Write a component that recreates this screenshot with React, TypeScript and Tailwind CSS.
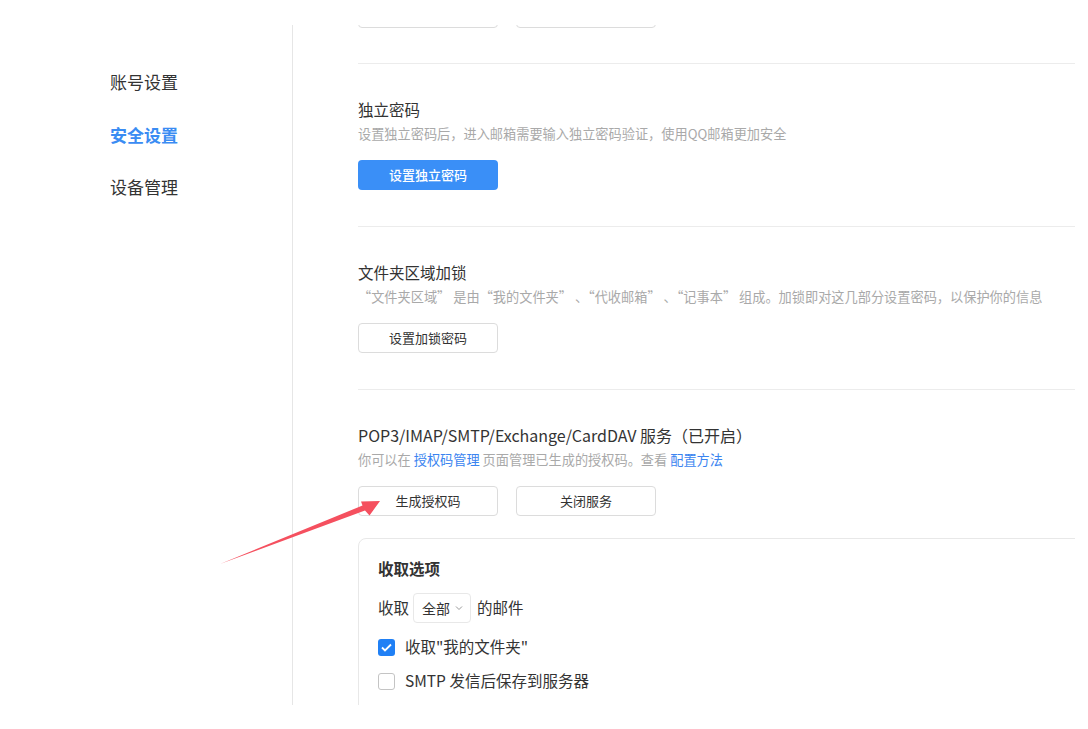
import React from 'react';

const font = { fontFamily: '"Noto Sans CJK SC", "Noto Sans", sans-serif' };

const navItems = [
  { label: '账号设置', active: false },
  { label: '安全设置', active: true },
  { label: '设备管理', active: false },
];

const PrimaryButton: React.FC<{ children?: React.ReactNode }> = ({ children }) => (
  <button className="h-[30px] w-[140px] rounded-[4px] bg-[#3a8ff7] text-[13px] font-medium text-white">
    {children}
  </button>
);

const GhostButton: React.FC<{ children?: React.ReactNode }> = ({ children }) => (
  <button className="h-[30px] w-[140px] rounded-[4px] border border-[#dcdcdc] bg-white text-[13px] text-[#333]">
    {children}
  </button>
);

const Section: React.FC<{ title: React.ReactNode; desc: React.ReactNode; children: React.ReactNode; last?: boolean }> = ({
  title,
  desc,
  children,
  last = false,
}) => (
  <div className={`border-t border-[#ececec] pt-[34px] ${last ? 'pb-[22px]' : 'pb-[36px]'}`}>
    <div className="h-[22px] text-[15.5px] leading-[22px] text-[#333]">{title}</div>
    <div className="mt-[5px] h-[18px] whitespace-nowrap text-[13.2px] leading-[18px] text-[#a9a9a9]">{desc}</div>
    <div className="mt-[17px] flex gap-[18px]">{children}</div>
  </div>
);

const Arrow: React.FC = () => (
  <svg className="pointer-events-none absolute left-0 top-0" width="1088" height="729" viewBox="0 0 1088 729">
    <polygon
      points="220,564 362.5,505.5 361,501.5 380,501 369.5,515.5 365,510.5"
      fill="#f5505f"
    />
  </svg>
);

const App: React.FC = () => {
  return (
    <div className="relative h-[729px] w-[1088px] overflow-hidden bg-white" style={font}>
      <div className="flex h-[705px] pt-[25px]">
        <aside className="w-[293px] shrink-0 border-r border-[#e6e6e6] pl-[110px] pt-[31px]">
          {navItems.map(item => (
            <div
              key={item.label}
              className={`h-[52.5px] text-[17px] leading-[52px] ${
                item.active ? 'font-bold text-[#3a8cf3]' : 'text-[#333]'
              }`}
            >
              {item.label}
            </div>
          ))}
        </aside>

        <main className="w-[782px] overflow-hidden pl-[65px]">
          <div className="-mt-[27px] w-[717px]">
            {/* buttons of the section above, scrolled out of view */}
            <div className="flex gap-[18px] pb-[35px]">
              <GhostButton />
              <GhostButton />
            </div>

            <Section title="独立密码" desc="设置独立密码后，进入邮箱需要输入独立密码验证，使用QQ邮箱更加安全">
              <PrimaryButton>设置独立密码</PrimaryButton>
            </Section>

            <Section
              title="文件夹区域加锁"
              desc="“文件夹区域” 是由“我的文件夹” 、“代收邮箱” 、“记事本” 组成。加锁即对这几部分设置密码，以保护你的信息"
            >
              <GhostButton>设置加锁密码</GhostButton>
            </Section>

            <Section
              last
              title={<span className="text-[16px]">POP3/IMAP/SMTP/Exchange/CardDAV 服务（已开启）</span>}
              desc={
                <>
                  你可以在 <span className="text-[#3a84f0]">授权码管理</span> 页面管理已生成的授权码。查看{' '}
                  <span className="text-[#3a84f0]">配置方法</span>
                </>
              }
            >
              <GhostButton>生成授权码</GhostButton>
              <GhostButton>关闭服务</GhostButton>
            </Section>

            <div className="h-[220px] w-[760px] rounded-[8px] border border-[#e8e8e8] pl-[19px] pt-[18px] text-[#333]">
              <div className="h-[22px] text-[15.5px] font-bold leading-[22px]">收取选项</div>
              <div className="mt-[14px] flex items-center gap-[4px] text-[15.5px]">
                <span>收取</span>
                <div className="flex h-[30px] w-[58px] items-center gap-[5px] rounded-[4px] border border-[#e8e8e8] pl-[8px] text-[14px]">
                  <span>全部</span>
                  <svg width="8" height="6" viewBox="0 0 8 6" fill="none">
                    <path d="M1 1.5 L4 4.5 L7 1.5" stroke="#999" strokeWidth="1" />
                  </svg>
                </div>
                <span className="pl-[2px]">的邮件</span>
              </div>
              <div className="mt-[12px] flex h-[24px] items-center gap-[10px] text-[15.5px]">
                <span className="flex h-[17px] w-[17px] items-center justify-center rounded-[3px] bg-[#2080f5]">
                  <svg width="11" height="9" viewBox="0 0 11 9" fill="none">
                    <path d="M1 4.5 L4 7.5 L10 1.5" stroke="#fff" strokeWidth="1.8" />
                  </svg>
                </span>
                <span>收取"我的文件夹"</span>
              </div>
              <div className="mt-[10px] flex h-[24px] items-center gap-[10px] text-[15.5px]">
                <span className="h-[17px] w-[17px] rounded-[3px] border border-[#c4c4c4] bg-white" />
                <span>SMTP 发信后保存到服务器</span>
              </div>
            </div>
          </div>
        </main>
      </div>
      <Arrow />
    </div>
  );
};

export default App;
